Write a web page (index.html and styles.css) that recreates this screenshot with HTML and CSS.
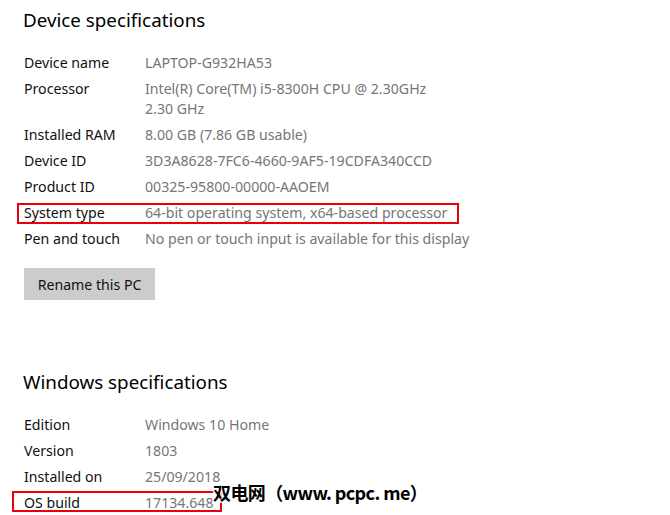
FILE: index.html
```html
<!DOCTYPE html>
<html lang="en">
<head>
<meta charset="utf-8">
<title>About</title>
<link rel="stylesheet" href="styles.css">
</head>
<body>
<main class="page">
  <section class="section">
    <h2 class="heading">Device specifications</h2>
    <div class="specs">
      <div class="row"><span class="label">Device name</span><span class="value">LAPTOP-G932HA53</span></div>
      <div class="row"><span class="label">Processor</span><span class="value">Intel(R) Core(TM) i5-8300H CPU @ 2.30GHz<br>2.30 GHz</span></div>
      <div class="row"><span class="label">Installed RAM</span><span class="value">8.00 GB (7.86 GB usable)</span></div>
      <div class="row"><span class="label">Device ID</span><span class="value">3D3A8628-7FC6-4660-9AF5-19CDFA340CCD</span></div>
      <div class="row"><span class="label">Product ID</span><span class="value">00325-95800-00000-AAOEM</span></div>
      <div class="row marked"><span class="label">System type</span><span class="value">64-bit operating system, x64-based processor</span><span class="mark mark-system"></span></div>
      <div class="row"><span class="label">Pen and touch</span><span class="value">No pen or touch input is available for this display</span></div>
    </div>
    <button class="btn" type="button">Rename this PC</button>
  </section>
  <section class="section section-windows">
    <h2 class="heading">Windows specifications</h2>
    <div class="specs">
      <div class="row"><span class="label">Edition</span><span class="value">Windows 10 Home</span></div>
      <div class="row"><span class="label">Version</span><span class="value">1803</span></div>
      <div class="row"><span class="label">Installed on</span><span class="value">25/09/2018</span></div>
      <div class="row marked"><span class="label">OS build</span><span class="value">17134.648</span><span class="mark mark-build"></span><span class="watermark">双电网（www. pcpc. me）</span></div>
    </div>
  </section>
</main>
</body>
</html>
```
FILE: styles.css
```css
html, body {
  margin: 0;
  padding: 0;
  background: #ffffff;
}

body {
  font-family: "Noto Sans", "Open Sans", sans-serif;
  color: #000000;
  overflow: hidden;
}

.page {
  padding: 6px 0 0 24px;
}

.section {
  display: flex;
  flex-direction: column;
  align-items: flex-start;
}

.section-windows {
  margin-top: 68px;
}

.heading {
  margin: 0 0 0 -1px;
  font-size: 18.8px;
  line-height: 28px;
  font-weight: 400;
  color: #000000;
}

.specs {
  margin-top: 19px;
  display: flex;
  flex-direction: column;
  gap: 6px;
}

.row {
  position: relative;
  display: grid;
  grid-template-columns: 121px auto;
  font-size: 14.15px;
  line-height: 20px;
}

.label {
  color: #111111;
}

.value {
  color: #767676;
  white-space: nowrap;
}

.btn {
  margin-top: 19px;
  width: 131px;
  height: 32px;
  padding: 0;
  border: none;
  background: #cccccc;
  color: #111111;
  font-family: inherit;
  font-size: 14.15px;
}

.mark {
  position: absolute;
  box-sizing: border-box;
  border: 2px solid #e8000b;
}

.mark-system {
  left: -7px;
  top: 0;
  width: 442px;
  height: 21px;
}

.mark-build {
  left: -12px;
  top: -2px;
  width: 210px;
  height: 21px;
}

.watermark {
  position: absolute;
  left: 189px;
  top: -13px;
  font-family: "Noto Sans CJK SC", sans-serif;
  font-size: 18px;
  font-weight: 700;
  letter-spacing: -0.6px;
  line-height: 24px;
  color: #000000;
  white-space: nowrap;
  text-shadow: 1px 0 0 #fff, -1px 0 0 #fff, 0 1px 0 #fff, 0 -1px 0 #fff, 1px 1px 0 #fff, -1px -1px 0 #fff, 1px -1px 0 #fff, -1px 1px 0 #fff;
}
```
